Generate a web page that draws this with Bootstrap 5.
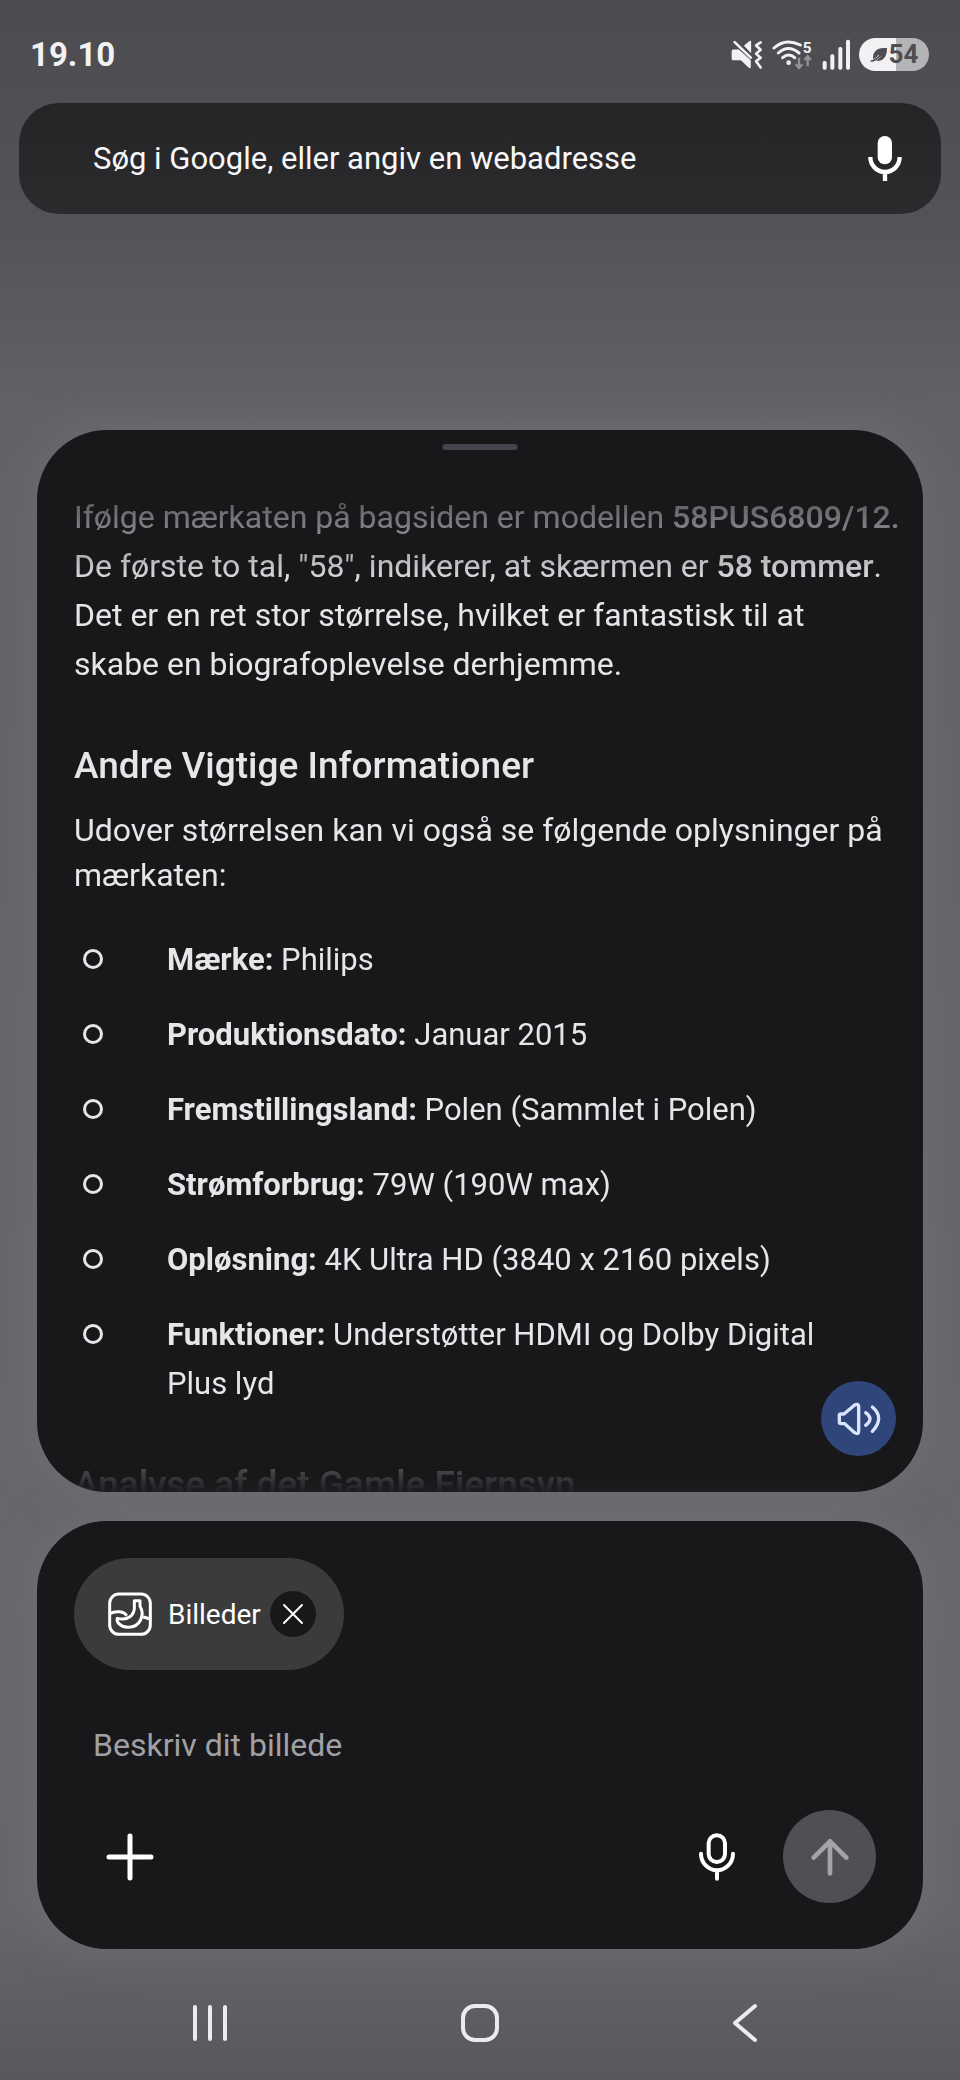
<!DOCTYPE html>
<html lang="da">
<head>
<meta charset="utf-8">
<meta name="viewport" content="width=device-width, initial-scale=1">
<title>Google</title>
<link href="https://cdn.jsdelivr.net/npm/bootstrap@5.3.0/dist/css/bootstrap.min.css" rel="stylesheet">
<style>
  body { font-family: Roboto, sans-serif; font-size: 32px; line-height: 49px; color: #e6e6e9; background: #5b5a5f; }
  svg { display: block; flex: none; }
  button { flex: none; }
  .screen { height: 100vh; background: linear-gradient(#4c4b50 0, #545358 11%, #636267 20%, #68676c 75%, #67666b 92%, #58575c 100%); }
  .statusbar { height: 103px; padding: 6px 31px 0 30px; color: #f2f2f4; }
  .clock { font-size: 33px; font-weight: 700; }
  .battery { width: 70px; height: 33px; gap: 1px; color: #4e4d51; font-size: 26px; font-weight: 700; line-height: 33px;
    background: linear-gradient(90deg, #f2f2f4 53%, #b4b3b6 53%); }
  .searchbar { height: 111px; margin: 0 19px; padding: 0 37px 0 74px; border-radius: 40px; background: linear-gradient(#252528, #2b2b2e); }
  .plain-field { background: none; border: 0; outline: 0; padding: 0; min-width: 0; color: #fff; }
  .searchbar .plain-field { font-size: 31px; }
  .searchbar .plain-field::placeholder { color: #f8f8fa; opacity: 1; }
  .sheet { margin: 0 37px; border-radius: 70px; background: #18181b; box-shadow: 0 0 44px 2px rgba(118,118,120,.55); }
  .answer { margin-top: 216px; min-height: 0; overflow: hidden; }
  .grabber { top: 14px; width: 75px; height: 6px; border-radius: 3px; background: #43444c; }
  .answer-text { padding: 63px 16px 0 37px; height: 100%; overflow: hidden;
    -webkit-mask-image: linear-gradient(transparent 20px, rgba(0,0,0,.35) 72px, rgba(0,0,0,.52) 100px, #000 155px, #000 calc(100% - 70px), rgba(0,0,0,.2) calc(100% - 19px), rgba(0,0,0,.02) 100%);
    mask-image: linear-gradient(transparent 20px, rgba(0,0,0,.35) 72px, rgba(0,0,0,.52) 100px, #000 155px, #000 calc(100% - 70px), rgba(0,0,0,.2) calc(100% - 19px), rgba(0,0,0,.02) 100%); }
  .answer-text h2 { font-size: 37px; line-height: 48px; font-weight: 500; margin: 53px 0 18px; }
  .answer-text p b { font-weight: 500; }
  .intro { line-height: 45px; }
  .facts { margin: 37px 0 0; padding: 0; list-style: none; font-size: 31px; }
  .facts b { font-weight: 700; }
  .facts li { display: flex; margin-bottom: 26px; }
  .facts li::before { content: ""; flex: none; width: 20px; height: 20px; margin: 14px 64px 0 9px; border: 3px solid currentColor; border-radius: 50%; }
  .speak { right: 27px; bottom: 36px; width: 75px; height: 75px; background: #304579; }
  .composer { margin-top: 29px; padding: 37px 37px 46px; }
  .chip { height: 112px; width: 270px; padding: 0 28px 0 34px; background: #3b3b3d; color: #fff; font-size: 28px; }
  .chip-close { width: 46px; height: 46px; background: #18181b; }
  .prompt { height: 49px; margin: 51px 19px 40px; font-size: 32px; }
  .prompt::placeholder { color: #a0a0a5; opacity: 1; }
  .tools { padding: 0 10px 0 32px; }
  .send { width: 93px; height: 93px; background: #4f4f54; }
  .navkeys { height: 131px; padding: 17px 201px 0 191px; }
</style>
</head>
<body>
<div class="screen d-flex flex-column">
  <header class="statusbar d-flex align-items-center justify-content-between flex-shrink-0">
    <span class="clock">19.10</span>
    <div class="d-flex align-items-center gap-2">
      <svg width="33" height="35" viewBox="92 50 100 105" fill="#f2f2f4">
        <path d="M97 92q0-5 5-5h17l36 33v20q0 7-6 3l-24-23h-23q-5 0-5-5zM134 76l16-14q6-4 6 3v34z"/>
        <path d="M106 65l49 47M185 66l-14 9 14 13-14 12 14 12-14 11 14 19" fill="none" stroke="#f2f2f4" stroke-width="8" stroke-linecap="round" stroke-linejoin="round"/>
      </svg>
      <svg width="43" height="35" viewBox="212 50 129 105">
        <g fill="none" stroke="#f2f2f4" stroke-width="9" stroke-linecap="round"><path d="M221 83q34-31 79-9M234 98q30-27 62 0M247 112q18-16 36 0"/></g>
        <circle cx="265" cy="127" r="7" fill="#f2f2f4"/>
        <text x="307" y="97" font-size="46" font-weight="700" fill="#f2f2f4">5</text>
        <path d="M296 112v30m-10-10l10 11 10-11M322 138v-29m-10 10l10-11 10 11" fill="none" stroke="#929194" stroke-width="7"/>
      </svg>
      <svg width="29" height="35" viewBox="363 50 87 105" fill="#f2f2f4"><rect x="365" y="122" width="12" height="26" rx="5"/><rect x="388" y="102" width="12" height="46" rx="5"/><rect x="412" y="80" width="12" height="68" rx="5"/><rect x="435" y="58" width="12" height="90" rx="5"/></svg>
      <span class="battery rounded-pill d-flex align-items-center justify-content-center">
        <svg width="18" height="16" viewBox="498 80 54 46"><path d="M508 118q-4-22 13-32 8-5 28-4 0 25-12 34-12 8-24 3z" fill="#4e4d51"/><path d="M500 122q15-1 27-17" fill="none" stroke="#f2f2f4" stroke-width="8"/><path d="M500 121q17 0 32-22" fill="none" stroke="#4e4d51" stroke-width="5"/></svg>
        54
      </span>
    </div>
  </header>

  <form class="searchbar d-flex align-items-center flex-shrink-0">
    <input class="plain-field flex-grow-1" type="text" aria-label="Søg" placeholder="Søg i Google, eller angiv en webadresse">
    <button class="btn p-0 border-0" type="button" aria-label="Stemmesøgning">
      <svg width="38" height="48" viewBox="500 342 112 144"><rect x="534" y="345" width="43" height="85" rx="21" fill="#fff"/><path d="M512 408a43 44 0 0 0 88 0M556 452v28" fill="none" stroke="#fff" stroke-width="13"/></svg>
    </button>
  </form>

  <main class="sheet answer position-relative flex-grow-1">
    <div class="grabber position-absolute start-50 translate-middle-x"></div>
    <div class="answer-text">
      <p class="m-0">Ifølge mærkaten på bagsiden er modellen <b>58PUS6809/12.</b><br>De første to tal, "58", indikerer, at skærmen er <b>58 tommer</b>.<br>Det er en ret stor størrelse, hvilket er fantastisk til at<br>skabe en biografoplevelse derhjemme.</p>
      <h2>Andre Vigtige Informationer</h2>
      <p class="intro m-0">Udover størrelsen kan vi også se følgende oplysninger på mærkaten:</p>
      <ul class="facts">
        <li><span><b>Mærke:</b> Philips</span></li>
        <li><span><b>Produktionsdato:</b> Januar 2015</span></li>
        <li><span><b>Fremstillingsland:</b> Polen (Sammlet i Polen)</span></li>
        <li><span><b>Strømforbrug:</b> 79W (190W max)</span></li>
        <li><span><b>Opløsning:</b> 4K Ultra HD (3840 x 2160 pixels)</span></li>
        <li><span><b>Funktioner:</b> Understøtter HDMI og Dolby Digital<br>Plus lyd</span></li>
      </ul>
      <h2>Analyse af det Gamle Fjernsyn</h2>
    </div>
    <button class="speak btn border-0 p-0 rounded-circle position-absolute d-flex align-items-center justify-content-center" type="button" aria-label="Læs højt">
      <svg width="46" height="36" viewBox="164 148 138 108" fill="none" stroke="#dbe4ff" stroke-width="10" stroke-linecap="round" stroke-linejoin="round"><path d="M174 191q0-4 5-4h9l32-27q12-6 12 5v74q0 11-12 4l-30-27h-11q-5 0-5-5zM253 183q26 18 0 38M273 166q38 32 0 73"/></svg>
    </button>
  </main>

  <form class="sheet composer position-relative flex-shrink-0">
    <div class="chip rounded-pill d-flex align-items-center">
      <svg width="44" height="44" viewBox="146 154 132 132" fill="none" stroke="#fff" stroke-width="9" stroke-linejoin="round"><rect x="151" y="160" width="122" height="121" rx="28"/><path d="M225 180h17v17c16 26 0 62-34 63-25 1-38-17-34-27 30 8 54-8 51-38zM151 219c18-10 44-7 51 6M252 229l21 6"/></svg>
      <span class="ms-3 me-auto">Billeder</span>
      <button class="chip-close btn border-0 p-0 rounded-circle d-flex align-items-center justify-content-center" type="button" aria-label="Fjern">
        <svg width="22" height="22" viewBox="0 0 22 22" stroke="#fff" stroke-width="2" stroke-linecap="round"><path d="M2 2l18 18M20 2L2 20"/></svg>
      </button>
    </div>
    <input class="prompt plain-field d-block" type="text" aria-label="Beskriv dit billede" placeholder="Beskriv dit billede">
    <div class="tools d-flex align-items-center">
      <button class="btn border-0 p-0 me-auto" type="button" aria-label="Tilføj">
        <svg width="48" height="48" viewBox="0 0 48 48" stroke="#fff" stroke-width="5" stroke-linecap="round"><path d="M24 3v42M3 24h42"/></svg>
      </button>
      <button class="btn border-0 p-0 me-5" type="button" aria-label="Diktér">
        <svg width="36" height="48" viewBox="118 126 108 144" fill="none" stroke="#fff" stroke-width="12" stroke-linecap="round"><rect x="147" y="133" width="49" height="80" rx="24"/><path d="M124 188a48 50 0 0 0 96 0M172 240v23"/></svg>
      </button>
      <button class="send btn border-0 p-0 rounded-circle d-flex align-items-center justify-content-center" type="button" aria-label="Send">
        <svg width="40" height="40" viewBox="448 137 120 120" fill="none" stroke="#a3a3a8" stroke-width="14" stroke-linecap="round" stroke-linejoin="round"><path d="M508 246v-96M459 199l49-49 49 49"/></svg>
      </button>
    </div>
  </form>

  <nav class="navkeys d-flex align-items-center justify-content-between flex-shrink-0" aria-label="Systemnavigation">
    <button class="btn border-0 p-0" type="button" aria-label="Seneste"><svg width="38" height="40" viewBox="0 0 38 40" stroke="#ececf0" stroke-width="4" stroke-linecap="round"><path d="M4 4v32M19 4v32M34 4v32"/></svg></button>
    <button class="btn border-0 p-0" type="button" aria-label="Hjem"><svg width="40" height="40" viewBox="0 0 40 40" fill="none" stroke="#ececf0" stroke-width="4"><rect x="3" y="3" width="34" height="34" rx="12"/></svg></button>
    <button class="btn border-0 p-0" type="button" aria-label="Tilbage"><svg width="28" height="40" viewBox="0 0 28 40" fill="none" stroke="#ececf0" stroke-width="4" stroke-linecap="round" stroke-linejoin="round"><path d="M24 3L4 20l20 17"/></svg></button>
  </nav>
</div>
<script src="https://cdn.jsdelivr.net/npm/bootstrap@5.3.0/dist/js/bootstrap.bundle.min.js"></script>
</body>
</html>
